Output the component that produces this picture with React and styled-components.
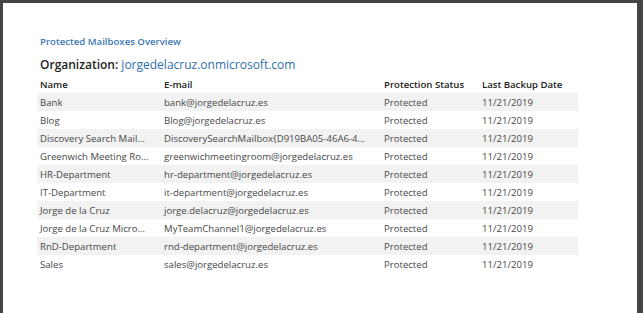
import styled, { createGlobalStyle } from "styled-components";

const GlobalStyle = createGlobalStyle`
  html, body {
    margin: 0;
    padding: 0;
    height: 100%;
    background: #434547;
  }
  #root {
    height: 100%;
  }
`;

const Viewer = styled.div`
  height: 100%;
  box-sizing: border-box;
  padding: 3px 6px 0 3px;
  display: flex;
`;

const Sheet = styled.div`
  flex: 1;
  background: #ffffff;
  padding: 32px 0 0 34px;
  font-family: "Open Sans", "Noto Sans", sans-serif;
`;

const ReportTitle = styled.div`
  font-size: 9.6px;
  line-height: 14px;
  font-weight: 600;
  color: #3b78b5;
  padding-left: 3px;
`;

const OrgLine = styled.div`
  margin-top: 7px;
  font-size: 12px;
  line-height: 18px;
  font-weight: 600;
  color: #1f1f1f;
  padding-left: 3px;
  span {
    color: #2e6fae;
    font-weight: 500;
  }
`;

const Table = styled.table`
  width: 541px;
  table-layout: fixed;
  border-collapse: collapse;
  margin-top: 1px;
`;

const Th = styled.th`
  width: ${(p) => p.$w - 15}px;
  text-align: left;
  font-size: 9.6px;
  font-weight: 600;
  color: #222222;
  height: 18px;
  padding: 0 12px 0 3px;
  white-space: nowrap;
`;

const Row = styled.tr`
  background: ${(p) => (p.$odd ? "#f2f2f2" : "#ffffff")};
`;

const Td = styled.td`
  font-size: 9.6px;
  color: #484848;
  height: 18px;
  padding: 0 12px 0 3px;
  white-space: nowrap;
  overflow: hidden;
  text-overflow: ellipsis;
`;

const columns = [
  { label: "Name", w: 124 },
  { label: "E-mail", w: 220 },
  { label: "Protection Status", w: 98 },
  { label: "Last Backup Date", w: 99 },
];

const mailboxes = [
  ["Bank", "bank@jorgedelacruz.es"],
  ["Blog", "Blog@jorgedelacruz.es"],
  ["Discovery Search Mailbox", "DiscoverySearchMailbox{D919BA05-46A6-415f-80AD-7E09334BB852}@jorgedelacruz.es"],
  ["Greenwich Meeting Room", "greenwichmeetingroom@jorgedelacruz.es"],
  ["HR-Department", "hr-department@jorgedelacruz.es"],
  ["IT-Department", "it-department@jorgedelacruz.es"],
  ["Jorge de la Cruz", "jorge.delacruz@jorgedelacruz.es"],
  ["Jorge de la Cruz Microsoft Teams", "MyTeamChannel1@jorgedelacruz.es"],
  ["RnD-Department", "rnd-department@jorgedelacruz.es"],
  ["Sales", "sales@jorgedelacruz.es"],
];

export default function App() {
  return (
    <>
      <GlobalStyle />
      <Viewer>
        <Sheet>
          <ReportTitle>Protected Mailboxes Overview</ReportTitle>
          <OrgLine>
            Organization: <span>jorgedelacruz.onmicrosoft.com</span>
          </OrgLine>
          <Table>
            <thead>
              <tr>
                {columns.map((c) => (
                  <Th key={c.label} $w={c.w}>
                    {c.label}
                  </Th>
                ))}
              </tr>
            </thead>
            <tbody>
              {mailboxes.map(([name, mail], i) => (
                <Row key={name} $odd={i % 2 === 0}>
                  <Td>{name}</Td>
                  <Td>{mail}</Td>
                  <Td>Protected</Td>
                  <Td>11/21/2019</Td>
                </Row>
              ))}
            </tbody>
          </Table>
        </Sheet>
      </Viewer>
    </>
  );
}
